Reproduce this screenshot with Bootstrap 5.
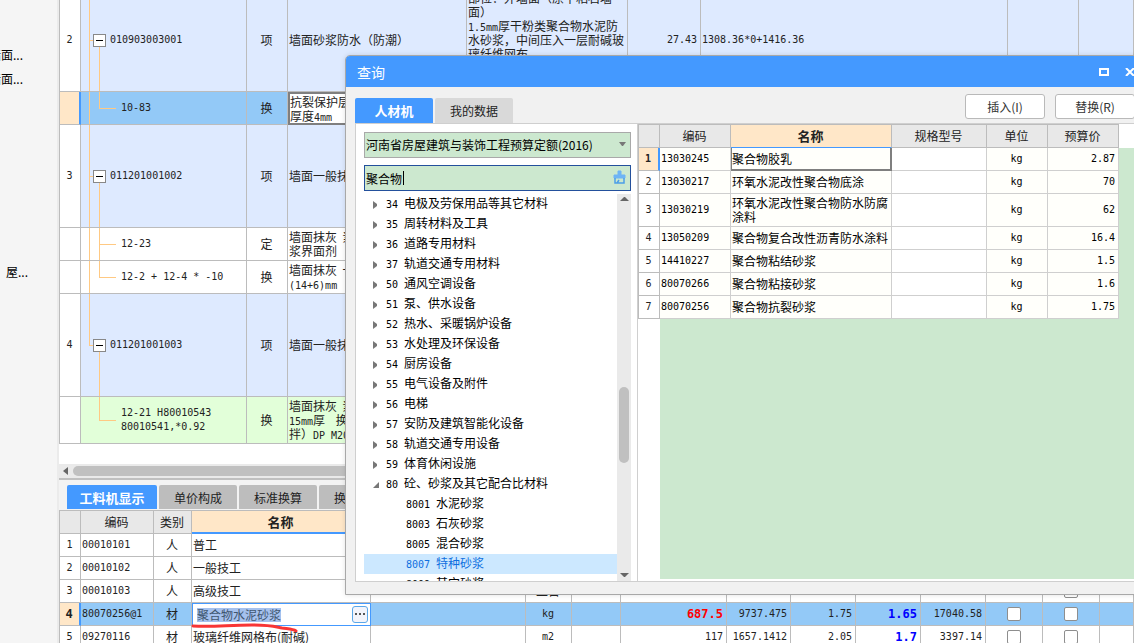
<!DOCTYPE html>
<html lang="zh-CN">
<head>
<meta charset="utf-8">
<meta name="viewport" content="width=device-width, initial-scale=1">
<title>查询</title>
<link href="https://cdn.jsdelivr.net/npm/bootstrap@5.3.0/dist/css/bootstrap.min.css" rel="stylesheet">
<style>
:root{--blue:#4499ff;--line:#bcbcbc;--head:#e8e8e8;--peach:#ffe7c8;--sel:#93c9f7;--green:#cce8cf;--guide:#ffc983}
body{font:12px/14px "Noto Sans CJK SC",sans-serif;color:#222;background:#f5f5f5}
.mono{font-family:"DejaVu Sans Mono",monospace;font-size:10px}
span.mono{line-height:1}
.mono-b{font-family:"DejaVu Sans Mono",monospace;font-size:12px;font-weight:700}
.red{color:#f00}
.deep{color:#00f}
.side{width:57px}
.side-item{height:24px;line-height:24px;white-space:nowrap;color:#000;text-decoration:none;display:block}
.side-cut{margin-left:-11px}
.side-in{margin-left:6px}
.side-gap{height:169px}
.side-top{height:43px}
.workarea{border-left:2px solid #ebebeb}

/* data grids */
.grid{table-layout:fixed;border-collapse:separate;border-spacing:0;border-left:1px solid var(--line);width:100%}
.grid td,.grid th{border-right:1px solid var(--line);border-bottom:1px solid var(--line);padding:0 2px 0 1px;overflow:hidden;white-space:nowrap;vertical-align:middle}
.grid th{background:var(--head);font-weight:400;text-align:center}
.grid .c{text-align:center}
.grid .r{text-align:right;padding-right:3px}
.grid th.cur{background:var(--peach);font-weight:700;font-size:13px;border-bottom-color:var(--blue)}
.lower .grid th.cur{border-bottom-width:2px}
.grid .num{text-align:center;background:#fff}
.grid .num-cur{background:var(--peach);border-right:2px solid var(--blue)}
.scrolled{margin-top:-11px}
.h-lg{height:103px}.h-md{height:47px}.h-sm{height:33px}
.item>td{background-color:#deeaff}
.picked>td{background-color:var(--sel)}
.fresh>td{background-color:#e2ffd9}
.plain>td{background-color:#fff}
.grid td.focus-cell{background:#fff;border:2px solid #7f7f7f;padding:0}

/* tree guides, painted behind the code column */
.grid td.node{padding-left:12px;background-image:linear-gradient(var(--guide),var(--guide)),linear-gradient(var(--guide),var(--guide)),linear-gradient(var(--guide),var(--guide));background-repeat:no-repeat;
 background-size:1px 100%,4px 1px,1px 50%;background-position:8px 0,8px 50%,18px 100%}
.grid td.node-end{background-size:1px 50%,4px 1px,1px 50%}
.grid td.leaf{padding-left:40px;background-image:linear-gradient(var(--guide),var(--guide)),linear-gradient(var(--guide),var(--guide)),linear-gradient(var(--guide),var(--guide));background-repeat:no-repeat;
 background-size:1px 100%,17px 1px,1px 50%;background-position:8px 0,18px 50%,18px 0}
.grid td.leaf-mid{background-size:1px 100%,17px 1px,1px 100%}
.grid td.leaf-out{background-size:0 0,17px 1px,1px 50%}
.toggle{width:13px;height:13px;border:1px solid #888;background:#fff;padding:0;display:flex;align-items:center;justify-content:center}
.toggle::after{content:"";width:7px;height:1px;background:#000}

.grid-view{padding-bottom:20px}
.hbar{height:14px;background:#eaeaea;padding:0 0 0 4px}
.hbar-thumb{height:10px;border-radius:5px 0 0 5px;background:#c0c0c0}
.lower{background:#f3f3f3;border-top:2px solid #c0c0c0}
.pane-tabs{gap:2px;padding:5px 0 1px 8px}
.pane-tab{width:78px;height:24px;border:0;border-radius:2px 2px 0 0;padding:2px 0 0;background:#bdbdbd;color:#222}
.pane-tab-on{background:var(--blue);color:#fff;font-weight:700;font-size:13px}
.pane-tab-wide{width:90px}
.lower .grid{border-top:1px solid var(--line)}
.lower tr{height:23px}
.grid td.edit-cell{background:#fff;border:1px solid var(--blue);padding:0 2px 0 4px;overflow:visible;position:relative}
.edit-text{background:#a5c1ee;color:#3f5670;border:0;padding:0;width:84px;height:14px;line-height:14px}
.more{width:16px;height:17px;border:1px solid #5ba7e8;border-radius:3px;background:#f3f4fb;padding:0;line-height:0}
.scribble{position:absolute;left:-3px;top:18px;width:112px;height:12px;pointer-events:none;z-index:2}
.tick{appearance:none;width:14px;height:14px;border:1px solid #8e8e8e;border-radius:2px;background:#fff;margin:0;display:block}
.tick-cell{padding:0!important}

/* query dialog */
.dialog-box{position:absolute;left:345px;right:-12px;top:55px;bottom:48px;background:#f1f1f1;border:1px solid #a8a8a8;border-radius:5px 5px 0 0;overflow:hidden;z-index:5;box-shadow:0 0 5px rgba(0,0,0,.12)}
.title{height:31px;background:var(--blue);color:#fff;font-size:14px;padding:0 10px 0 11px}
.title button{border:0;background:none;padding:0;line-height:0}
.tools{height:36px;padding:7px 10px 0 9px}
.dlg-tabs{gap:2px}
.dlg-acts{gap:10px}
.dlg-tab{width:78px;height:25px;border:0;border-radius:2px 2px 0 0;background:#d9d9d9;color:#222;padding:0}
.dlg-tab-on{background:var(--blue);color:#fff;font-weight:700;font-size:13px}
.act{width:80px;height:25px;border:1px solid #b9b9b9;border-radius:3px;background:#fff;color:#333;font-size:12px;line-height:14px;padding:0}
.dlg-main{margin:0 0 12px 9px;border-top:1px solid #cfcfcf;border-bottom:1px solid #cfcfcf;background:#fff}
.finder{width:283px;border-left:1px solid #cfcfcf;border-right:1px solid #cfcfcf;padding:8px 6px 0 8px}
.finder-row{margin-bottom:7px}
.field{height:26px;border-radius:0;background:var(--green);color:#000;font-size:12px;line-height:14px;padding:0 1px;border:1px solid #a9a9a9;appearance:none;width:100%}
.field-on{border-color:#23509c}
.field:focus{outline:0}
.field-icon{position:absolute;right:5px;top:5px;pointer-events:none}
.caret{position:absolute;left:39px;top:6px;width:1px;height:14px;background:#000}
.tree-pane{margin-top:-4px}
.tree-row{height:20px;line-height:18px;padding-left:6px;color:#000;white-space:pre;gap:5px}
.tree-row svg{width:11px;flex:none;margin-top:2px}
.tree-sub{padding-left:42px}
.tree-on{background:#cce8ff;color:#0f6fe0}
.vbar{width:14px;background:#eaeaea;padding:3px 0}
.vbar-thumb{width:10px;height:76px;border-radius:5px;background:#c0c0c0}
.room-above{flex:184 1 0}
.room-below{flex:109 1 0}
.results{background:#fff;padding-bottom:2px}
.results .grid{width:481px;border-top:1px solid var(--line)}
.results .grid td{background:#fffffb;border-color:#cfcfcf;color:#000}
.results .grid td.num{background:#fff;border-color:var(--line);color:#222}
.results .grid td.num-cur{background:var(--peach);border-right-color:var(--blue)}
.results .grid td.blank{background:#fff}
.results .grid td.focus-cell{border:1px solid #7f7f7f;border-width:0 2px 2px 0;padding:0 1px;box-shadow:inset 1px 0 #7f7f7f}
.results tr{height:23px}
.results tr.h-sm{height:33px}
.res-fill{background:linear-gradient(#fff,#fff) 0 0/22px 100% no-repeat,linear-gradient(#fff,#fff) 0 0/100% 24px no-repeat,var(--green)}
</style>
</head>
<body class="vh-100 overflow-hidden position-relative d-flex m-0">

<aside class="side flex-shrink-0 overflow-hidden">
  <div class="side-top"></div>
  <a class="side-item side-cut" href="#">墙面...</a>
  <a class="side-item side-cut" href="#">墙面...</a>
  <div class="side-gap"></div>
  <a class="side-item side-in" href="#">屋...</a>
</aside>

<main class="workarea flex-grow-1 overflow-hidden d-flex flex-column bg-white">
  <section class="flex-shrink-0 overflow-hidden">
    <div class="grid-view overflow-hidden">
    <table class="grid scrolled">
      <colgroup><col style="width:21px"><col style="width:166px"><col style="width:41px"><col style="width:179px"><col style="width:161px"><col style="width:73px"><col style="width:307px"><col style="width:71px"><col></colgroup>
      <tbody>
      <tr class="h-lg item"><td class="num mono">2</td><td class="node"><div class="d-flex align-items-center gap-1"><button class="toggle" aria-label="折叠"></button><span class="mono">010903003001</span></div></td><td class="c">项</td><td>墙面砂浆防水（防潮）</td><td>部位：外墙面（原干粘石墙<br>面）<br><span class="mono">1.5mm</span>厚干粉类聚合物水泥防<br>水砂浆，中间压入一层耐碱玻<br>璃纤维网布<br>&nbsp;<br>&nbsp;</td><td class="r mono">27.43</td><td class="mono">1308.36*0+1416.36</td><td></td><td></td></tr>
      <tr class="h-sm picked"><td class="num num-cur"></td><td class="leaf mono">10-83</td><td class="c">换</td><td class="focus-cell">抗裂保护层<br>厚度<span class="mono">4mm</span></td><td></td><td></td><td></td><td></td><td></td></tr>
      <tr class="h-lg item"><td class="num mono">3</td><td class="node"><div class="d-flex align-items-center gap-1"><button class="toggle" aria-label="折叠"></button><span class="mono">011201001002</span></div></td><td class="c">项</td><td>墙面一般抹灰</td><td></td><td></td><td></td><td></td><td></td></tr>
      <tr class="h-sm plain"><td></td><td class="leaf leaf-mid mono">12-23</td><td class="c">定</td><td>墙面抹灰&nbsp; 素水泥<br>浆界面剂</td><td></td><td></td><td></td><td></td><td></td></tr>
      <tr class="h-sm plain"><td></td><td class="leaf mono">12-2 + 12-4 * -10</td><td class="c">换</td><td>墙面抹灰&nbsp; 一般<br><span class="mono">(14+6)mm</span></td><td></td><td></td><td></td><td></td><td></td></tr>
      <tr class="h-lg item"><td class="num mono">4</td><td class="node node-end"><div class="d-flex align-items-center gap-1"><button class="toggle" aria-label="折叠"></button><span class="mono">011201001003</span></div></td><td class="c">项</td><td>墙面一般抹灰</td><td></td><td></td><td></td><td></td><td></td></tr>
      <tr class="h-md fresh"><td class="num"></td><td class="leaf leaf-out mono">12-21 H80010543<br>80010541,*0.92</td><td class="c">换</td><td>墙面抹灰&nbsp; 素水泥<br><span class="mono">15mm</span>厚&nbsp; &nbsp; 换<br>拌）<span class="mono">DP M20</span></td><td></td><td></td><td></td><td></td><td></td></tr>
      </tbody>
    </table>
    </div>
    <div class="hbar d-flex align-items-center gap-1">
      <svg width="6" height="8" viewBox="0 0 6 8"><path d="M5 0v8L0 4z" fill="#666"/></svg>
      <div class="hbar-thumb flex-grow-1"></div>
    </div>
  </section>

  <section class="lower flex-grow-1 overflow-hidden">
    <div class="pane-tabs d-flex" role="tablist">
      <button class="pane-tab pane-tab-on pane-tab-wide">工料机显示</button>
      <button class="pane-tab">单价构成</button>
      <button class="pane-tab">标准换算</button>
      <button class="pane-tab">换算信息</button>
    </div>
    <table class="grid bg-white">
      <colgroup><col style="width:21px"><col style="width:73px"><col style="width:38px"><col style="width:179px"><col style="width:155px"><col style="width:46px"><col style="width:49px"><col style="width:106px"><col style="width:64px"><col style="width:65px"><col style="width:65px"><col style="width:65px"><col style="width:57px"><col style="width:57px"><col></colgroup>
      <thead><tr><th></th><th>编码</th><th>类别</th><th class="cur">名称</th><th></th><th>单位</th><th></th><th></th><th></th><th></th><th></th><th></th><th></th><th></th><th></th></tr></thead>
      <tbody>
      <tr><td class="num mono">1</td><td class="mono">00010101</td><td class="c">人</td><td>普工</td><td></td><td class="c">工日</td><td></td><td></td><td></td><td></td><td></td><td></td><td></td><td></td><td></td></tr>
      <tr><td class="num mono">2</td><td class="mono">00010102</td><td class="c">人</td><td>一般技工</td><td></td><td class="c">工日</td><td></td><td></td><td></td><td></td><td></td><td></td><td></td><td></td><td></td></tr>
      <tr><td class="num mono">3</td><td class="mono">00010103</td><td class="c">人</td><td>高级技工</td><td></td><td class="c">工日</td><td></td><td></td><td></td><td></td><td></td><td></td><td></td><td class="tick-cell"><input class="tick mx-auto" type="checkbox" aria-label="选择"></td><td></td></tr>
      <tr class="picked"><td class="num num-cur mono-b">4</td><td class="mono">80070256@1</td><td class="c">材</td><td class="edit-cell"><div class="d-flex align-items-center justify-content-between"><input class="edit-text" value="聚合物水泥砂浆" aria-label="名称"><button class="more" aria-label="更多"><svg width="12" height="3" viewBox="0 0 12 3"><path d="M1 0h2v2H1zM5 0h2v2H5zM9 0h2v2H9z" fill="#555"/></svg></button></div><svg class="scribble" viewBox="0 0 112 12"><path d="M3 4C25 5 38 3 62 3C82 3 86 5 92 6C99 7 103 7 106 9" fill="none" stroke="#f83535" stroke-width="3" stroke-linecap="round"/></svg></td><td></td><td class="c mono">kg</td><td></td><td class="r mono-b red">687.5</td><td class="r mono">9737.475</td><td class="r mono">1.75</td><td class="r mono-b deep">1.65</td><td class="r mono">17040.58</td><td class="tick-cell"><input class="tick mx-auto" type="checkbox" aria-label="选择"></td><td class="tick-cell"><input class="tick mx-auto" type="checkbox" aria-label="选择"></td><td></td></tr>
      <tr><td class="num mono">5</td><td class="mono">09270116</td><td class="c">材</td><td>玻璃纤维网格布(耐碱)</td><td></td><td class="c mono">m2</td><td></td><td class="r mono">117</td><td class="r mono">1657.1412</td><td class="r mono">2.05</td><td class="r mono-b deep">1.7</td><td class="r mono">3397.14</td><td class="tick-cell"><input class="tick mx-auto" type="checkbox" aria-label="选择"></td><td class="tick-cell"><input class="tick mx-auto" type="checkbox" aria-label="选择"></td><td></td></tr>
      </tbody>
    </table>
  </section>
</main>

<div class="dialog-box d-flex flex-column" role="dialog" aria-label="查询">
  <header class="title flex-shrink-0 d-flex align-items-center">
    <span class="me-auto">查询</span>
    <button class="me-3" aria-label="最大化"><svg width="10" height="8" viewBox="0 0 10 8"><path d="M1 1h8v6H1z" fill="none" stroke="#fff" stroke-width="2"/></svg></button>
    <button aria-label="关闭"><svg width="10" height="8" viewBox="0 0 10 8"><path d="M1 0l8 8M9 0L1 8" stroke="#fff" stroke-width="2"/></svg></button>
  </header>
  <div class="tools flex-shrink-0 d-flex align-items-start">
    <div class="dlg-tabs d-flex me-auto pt-1" role="tablist">
      <button class="dlg-tab dlg-tab-on">人材机</button>
      <button class="dlg-tab">我的数据</button>
    </div>
    <div class="dlg-acts d-flex"><button class="btn act">插入(I)</button><button class="btn act">替换(R)</button></div>
  </div>
  <div class="dlg-main flex-grow-1 d-flex overflow-hidden">
    <div class="finder flex-shrink-0 d-flex flex-column">
      <div class="finder-row position-relative flex-shrink-0">
        <select class="field d-block" aria-label="定额库"><option>河南省房屋建筑与装饰工程预算定额(2016)</option></select>
        <svg class="field-icon" width="7" height="15" viewBox="0 0 7 15"><path d="M0 5h7L4 9H3z" fill="#777"/></svg>
      </div>
      <div class="finder-row position-relative flex-shrink-0">
        <input class="field field-on d-block" type="text" value="聚合物" aria-label="关键字">
        <span class="caret"></span>
        <svg class="field-icon" width="14" height="15" viewBox="0 0 14 15"><path d="M6 1h3v4h4v3H2V5h4z" fill="#6fb4f5" stroke="#6fb4f5"/><path d="M3 8v5h9V8M5 13l2-3" fill="none" stroke="#4c9ee8" stroke-width="1.5"/></svg>
      </div>
      <div class="tree-pane d-flex flex-grow-1 overflow-hidden">
        <div class="flex-grow-1 overflow-hidden" id="tree"></div>
        <div class="vbar flex-shrink-0 d-flex flex-column align-items-center">
          <svg class="flex-shrink-0" width="9" height="5" viewBox="0 0 9 5"><path d="M0 4h9L5 0H4z" fill="#666"/></svg>
          <div class="room-above"></div>
          <div class="vbar-thumb flex-shrink-0"></div>
          <div class="room-below"></div>
          <svg class="flex-shrink-0" width="9" height="5" viewBox="0 0 9 5"><path d="M0 0h9L5 4H4z" fill="#666"/></svg>
        </div>
      </div>
    </div>
    <div class="results flex-grow-1 d-flex">
     <div class="res-fill flex-grow-1">
      <table class="grid">
        <colgroup><col style="width:21px"><col style="width:71px"><col style="width:161px"><col style="width:95px"><col style="width:61px"><col style="width:71px"></colgroup>
        <thead><tr><th></th><th>编码</th><th class="cur">名称</th><th>规格型号</th><th>单位</th><th>预算价</th></tr></thead>
        <tbody>
        <tr><td class="num num-cur mono fw-bold">1</td><td class="mono">13030245</td><td class="focus-cell">聚合物胶乳</td><td class="blank"></td><td class="c mono">kg</td><td class="r mono">2.87</td></tr>
        <tr><td class="num mono">2</td><td class="mono">13030217</td><td>环氧水泥改性聚合物底涂</td><td class="blank"></td><td class="c mono">kg</td><td class="r mono">70</td></tr>
        <tr class="h-sm"><td class="num mono">3</td><td class="mono">13030219</td><td>环氧水泥改性聚合物防水防腐<br>涂料</td><td class="blank"></td><td class="c mono">kg</td><td class="r mono">62</td></tr>
        <tr><td class="num mono">4</td><td class="mono">13050209</td><td>聚合物复合改性沥青防水涂料</td><td class="blank"></td><td class="c mono">kg</td><td class="r mono">16.4</td></tr>
        <tr><td class="num mono">5</td><td class="mono">14410227</td><td>聚合物粘结砂浆</td><td class="blank"></td><td class="c mono">kg</td><td class="r mono">1.5</td></tr>
        <tr><td class="num mono">6</td><td class="mono">80070266</td><td>聚合物粘接砂浆</td><td class="blank"></td><td class="c mono">kg</td><td class="r mono">1.6</td></tr>
        <tr><td class="num mono">7</td><td class="mono">80070256</td><td>聚合物抗裂砂浆</td><td class="blank"></td><td class="c mono">kg</td><td class="r mono">1.75</td></tr>
        </tbody>
      </table>
     </div>
    </div>
  </div>
</div>

<script src="https://cdn.jsdelivr.net/npm/bootstrap@5.3.0/dist/js/bootstrap.bundle.min.js"></script>
<script>
const groups=[["34","电极及劳保用品等其它材料"],["35","周转材料及工具"],["36","道路专用材料"],["37","轨道交通专用材料"],["50","通风空调设备"],["51","泵、供水设备"],["52","热水、采暖锅炉设备"],["53","水处理及环保设备"],["54","厨房设备"],["55","电气设备及附件"],["56","电梯"],["57","安防及建筑智能化设备"],["58","轨道交通专用设备"],["59","体育休闲设施"],["80","砼、砂浆及其它配合比材料"],["8001","水泥砂浆"],["8003","石灰砂浆"],["8005","混合砂浆"],["8007","特种砂浆"],["8009","其它砂浆"]];
const shut='<svg height="8" viewBox="0 0 11 8"><path d="M3 0l4 3v2L3 8z" fill="#777"/></svg>';
const open='<svg height="8" viewBox="0 0 11 8"><path d="M9 1v6H3z" fill="#777"/></svg>';
document.getElementById("tree").innerHTML=groups.map(([code,name])=>{
  const sub=code.length>2;
  return `<div class="tree-row d-flex ${sub?"tree-sub":""} ${code==="8007"?"tree-on":""}">${sub?"":`<span class="d-flex align-items-center">${code==="80"?open:shut}</span>`}<span><span class="mono">${code} </span>${name}</span></div>`;
}).join("");
</script>
</body>
</html>
